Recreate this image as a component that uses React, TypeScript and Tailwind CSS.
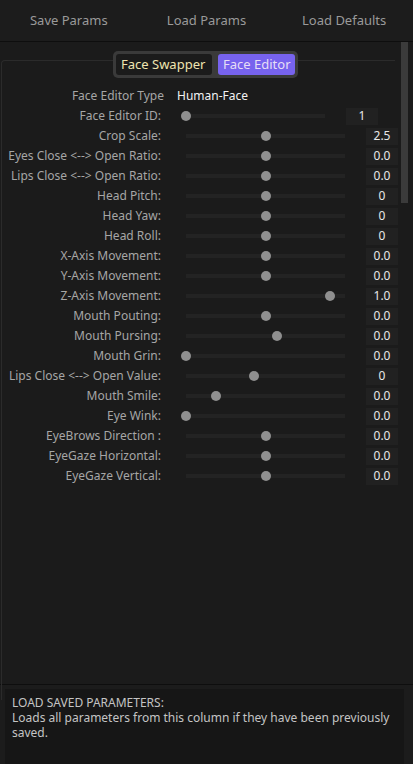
import React from "react";

type Row = { label: string; value: string; pos: number };

const rows: Row[] = [
  { label: "Crop Scale:", value: "2.5", pos: 0.5 },
  { label: "Eyes Close <--> Open Ratio:", value: "0.0", pos: 0.5 },
  { label: "Lips Close <--> Open Ratio:", value: "0.0", pos: 0.5 },
  { label: "Head Pitch:", value: "0", pos: 0.5 },
  { label: "Head Yaw:", value: "0", pos: 0.5 },
  { label: "Head Roll:", value: "0", pos: 0.5 },
  { label: "X-Axis Movement:", value: "0.0", pos: 0.5 },
  { label: "Y-Axis Movement:", value: "0.0", pos: 0.5 },
  { label: "Z-Axis Movement:", value: "1.0", pos: 0.905 },
  { label: "Mouth Pouting:", value: "0.0", pos: 0.5 },
  { label: "Mouth Pursing:", value: "0.0", pos: 0.57 },
  { label: "Mouth Grin:", value: "0.0", pos: 0 },
  { label: "Lips Close <--> Open Value:", value: "0", pos: 0.43 },
  { label: "Mouth Smile:", value: "0.0", pos: 0.19 },
  { label: "Eye Wink:", value: "0.0", pos: 0 },
  { label: "EyeBrows Direction :", value: "0.0", pos: 0.5 },
  { label: "EyeGaze Horizontal:", value: "0.0", pos: 0.5 },
  { label: "EyeGaze Vertical:", value: "0.0", pos: 0.5 },
];

function Slider({ pos, width }: { pos: number; width: number }) {
  return (
    <div className="relative h-[4px] bg-[#232323]" style={{ width }}>
      <div
        className="absolute top-1/2 h-[10px] w-[10px] -translate-x-1/2 -translate-y-1/2 rounded-full bg-[#8f8f8f]"
        style={{ left: `${pos * 100}%` }}
      />
    </div>
  );
}

export default function App() {
  return (
    <div
      className="flex h-[764px] w-[413px] flex-col overflow-hidden bg-[#1b1b1b] text-[12px]"
      style={{ fontFamily: '"Noto Sans", "Open Sans", sans-serif' }}
    >
      {/* top buttons */}
      <div className="grid h-[42px] shrink-0 grid-cols-3 border-b border-[#0e0e0e] bg-[#1c1c1c] text-[13px] text-[#9a9a9a]">
        <div className="flex items-center justify-center">Save Params</div>
        <div className="flex items-center justify-center">Load Params</div>
        <div className="flex items-center justify-center">Load Defaults</div>
      </div>

      <div className="flex min-h-0 flex-1">
        {/* content */}
        <div className="relative flex-1 pt-[9px]">
          <div className="ml-[1px] mr-[3px] mt-[9px] h-[640px] rounded-tl-[4px] border-l border-t border-[#2b2b2b]" />
          {/* tabs */}
          <div className="absolute left-[113px] top-[9px] flex h-[27px] gap-[6px] rounded-[5px] bg-[#3a3a3a] p-[3px]">
            <div className="flex w-[96px] items-center rounded-[3px] bg-[#1b1b1b] pl-[5px] text-[13px] text-[#efe4b0]">
              Face Swapper
            </div>
            <div className="flex w-[77px] items-center rounded-[3px] bg-[#7763ee] pl-[5px] text-[13px] text-[#e6def6]">
              Face Editor
            </div>
          </div>

          <div className="absolute left-0 top-[44px] w-full">
            <div className="flex h-[20px] items-center">
              <div className="w-[164px] text-right text-[#a6a6a6]">Face Editor Type</div>
              <div className="ml-[13px] text-[#f2f2f2]">Human-Face</div>
            </div>
            <div className="flex h-[20px] items-center">
              <div className="w-[161px] text-right text-[#a6a6a6]">Face Editor ID:</div>
              <div className="ml-[20px]">
                <Slider pos={0.035} width={144} />
              </div>
              <div className="ml-[21px] flex h-[17px] w-[32px] items-center justify-center bg-[#212121] text-[#e8e8e8]">
                1
              </div>
            </div>
            {rows.map((r) => (
              <div key={r.label} className="flex h-[20px] items-center">
                <div className="w-[161px] whitespace-nowrap text-right text-[#a6a6a6]">{r.label}</div>
                <div className="ml-[25px]">
                  <Slider pos={r.pos} width={159} />
                </div>
                <div className="ml-[21px] flex h-[17px] w-[32px] items-center justify-center bg-[#212121] text-[#e8e8e8]">
                  {r.value}
                </div>
              </div>
            ))}
          </div>
        </div>
        {/* scrollbar */}
        <div className="w-[15px] shrink-0 bg-[#1b1b1b] pl-[3px]">
          <div className="h-[161px] w-[7px] bg-[#3b3b3b]" />
        </div>
      </div>

      {/* description */}
      <div className="h-[80px] shrink-0 border-t border-[#0e0e0e] bg-[#1c1c1c] pl-[5px] pr-[9px] pt-[4px]">
        <div className="h-full bg-[#161616] px-[7px] pt-[6px] leading-[15px] text-[#c4c4c4]">
          <div>LOAD SAVED PARAMETERS:</div>
          <div>Loads all parameters from this column if they have been previously saved.</div>
        </div>
      </div>
    </div>
  );
}
